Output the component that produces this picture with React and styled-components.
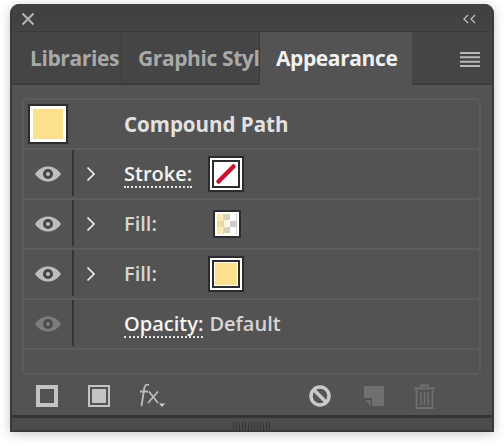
import React from 'react'
import styled, { createGlobalStyle } from 'styled-components'

const GlobalStyle = createGlobalStyle`
    html, body {
        margin: 0;
        padding: 0;
        background: #fff;
    }
    * {
        box-sizing: border-box;
    }
`

const Page = styled.div`
    width: 504px;
    height: 446px;
    padding: 4px 10px 14px;
    font-family: "Open Sans", "Noto Sans", sans-serif;
    overflow: hidden;
`

const Panel = styled.div`
    width: 484px;
    height: 428px;
    border-radius: 9px 9px 0 0;
    background: #535353;
    box-shadow: 0 2px 12px rgba(0, 0, 0, 0.22);
    border-right: 2px solid #3a3a3a;
    border-left: 2px solid #3a3a3a;
    border-bottom: 2px solid #3a3a3a;
    display: flex;
    flex-direction: column;
    overflow: hidden;
`

const TitleBar = styled.div`
    height: 28px;
    flex: none;
    background: linear-gradient(#3f3f3f, #444);
    border-bottom: 1px solid #3a3a3a;
    display: flex;
    align-items: center;
    justify-content: space-between;
    padding: 3px 15px 0 9px;
`

const TabBar = styled.div`
    height: 53px;
    flex: none;
    display: flex;
    background: #454545;
    border-bottom: 2px solid #3c3c3c;
`

const Tab = styled.div`
    width: ${p => p.$w}px;
    flex: none;
    height: ${p => (p.$active ? 53 : 51)}px;
    padding: 10px 0 0 ${p => p.$pad}px;
    font-size: 21px;
    font-weight: 700;
    line-height: 32px;
    letter-spacing: -0.4px;
    white-space: nowrap;
    overflow: hidden;
    color: ${p => (p.$active ? '#f1f1f1' : '#a9a9a9')};
    background: ${p => (p.$active ? '#535353' : 'transparent')};
    border-right: ${p => (p.$active ? 'none' : '1px solid #3b3b3b')};
`

const MenuButton = styled.div`
    margin-left: auto;
    margin-right: 12px;
    padding-top: 18px;
`

const Body = styled.div`
    flex: 1;
    padding: 13px 11px 0 10px;
    display: flex;
    flex-direction: column;
`

const List = styled.div`
    height: 277px;
    flex: none;
    border: 2px solid #5c5c5c;
    border-radius: 5px;
`

const Row = styled.div`
    height: 50px;
    display: grid;
    grid-template-columns: 48px 2px 50px 84px 1fr;
    align-items: center;
    border-bottom: 2px solid #5c5c5c;
`

const EyeCell = styled.div`
    display: flex;
    justify-content: center;
    padding-right: 1px;
    opacity: ${p => (p.$dim ? 0.4 : 1)};
`

const Divider = styled.div`
    width: 2px;
    height: 46px;
    margin-bottom: 2px;
    background: #353535;
`

const Chevron = styled.div`
    display: flex;
    padding-left: 12px;
`

const Label = styled.div`
    font-size: 20px;
    font-weight: 600;
    line-height: 26px;
    white-space: nowrap;
    color: #d6d6d6;
`

const Dotted = styled.span`
    color: #f4f4f4;
    border-bottom: 2px dotted #e4e4e4;
    display: inline-block;
    line-height: 24px;
`

const Value = styled.span`
    color: #d6d6d6;
    margin-left: 6px;
`

const HeaderRow = styled.div`
    height: 50px;
    display: flex;
    align-items: center;
    padding-left: 4px;
    border-bottom: 2px solid #5c5c5c;
`

const HeaderTitle = styled.div`
    font-size: 20.5px;
    font-weight: 700;
    color: #e2e2e2;
    margin-left: 56px;
    padding-bottom: 1px;
`

const Swatch = styled.div`
    flex: none;
    width: ${p => p.$size}px;
    height: ${p => p.$size}px;
    border: 2px solid #2c2c2c;
    background: #fff;
    padding: ${p => p.$pad}px;
    display: flex;
`

const InnerBorder = styled.div`
    flex: 1;
    border: 2px solid #2c2c2c;
    background: #fff;
    padding: 1px;
    display: flex;
`

const Yellow = styled.div`
    flex: 1;
    background: #fde08c;
`

const SwatchCell = styled.div`
    display: flex;
    padding-left: ${p => p.$pad}px;
`

const Checker = styled.div`
    flex: 1;
    background:
        linear-gradient(90deg, rgba(253, 224, 140, 0.85), rgba(253, 224, 140, 0) 70%),
        conic-gradient(#ccc 25%, #fff 0 50%, #ccc 0 75%, #fff 0) 0 0 / 13px 13px;
`

const Footer = styled.div`
    height: 40px;
    flex: none;
    display: flex;
    align-items: center;
    padding: 2px 0 0 14px;
`

const FooterIcon = styled.div`
    display: flex;
    flex: none;
    margin-left: ${p => p.$ml || 0}px;
`

const Grip = styled.div`
    height: 19px;
    flex: none;
    margin-top: auto;
    border-top: 3px solid #343434;
    background: #4c4c4c;
    display: flex;
    justify-content: center;
    align-items: center;
`

const GripLines = styled.div`
    width: 38px;
    height: 8px;
    background: repeating-linear-gradient(90deg, #343434 0 1px, transparent 1px 3px);
`

const Eye = () => (
    <svg width="28" height="20" viewBox="0 0 28 20">
        <path d="M1 10C5 4.5 9 2.5 14 2.5S23 4.5 27 10C23 15.500 19 17.500 14 17.500S5 15.500 1 10Z" fill="#bdbdbd" />
        <circle cx="14" cy="10" r="5" fill="#464646" />
        <circle cx="14" cy="10" r="2" fill="#bdbdbd" />
    </svg>
)

const ChevronIcon = () => (
    <svg width="10" height="16" viewBox="0 0 10 16">
        <path d="M1.500 1.500L8 8L1.500 14.500" fill="none" stroke="#f0f0f0" strokeWidth="1.700" />
    </svg>
)

const rows = [
    { label: 'Stroke:', dotted: true, swatch: 'stroke' },
    { label: 'Fill:', swatch: 'checker' },
    { label: 'Fill:', swatch: 'yellow' },
]

const RowSwatch = ({ type }) => {
    if (type === 'checker') {
        return (
            <SwatchCell $pad={5}>
                <Swatch $size={28} $pad={2}><Checker /></Swatch>
            </SwatchCell>
        )
    }
    return (
        <SwatchCell $pad={0}>
            <Swatch $size={36} $pad={2}>
                <InnerBorder>
                    {type === 'yellow' ? <Yellow /> : (
                        <svg width="22" height="22" viewBox="0 0 22 22">
                            <path d="M3.500 18.500L18.500 3.500" stroke="#c8102e" strokeWidth="4.500" strokeLinecap="round" />
                        </svg>
                    )}
                </InnerBorder>
            </Swatch>
        </SwatchCell>
    )
}

export default function App() {
    return (
        <Page>
            <GlobalStyle />
            <Panel>
                <TitleBar>
                    <svg width="14" height="14" viewBox="0 0 14 14">
                        <path d="M1.500 1.500L12.500 12.500M12.500 1.500L1.500 12.500" stroke="#b4b4b4" strokeWidth="2" />
                    </svg>
                    <svg width="15" height="10" viewBox="0 0 15 10">
                        <path d="M6 1L2 5L6 9M13 1L9 5L13 9" fill="none" stroke="#bdbdbd" strokeWidth="1.300" />
                    </svg>
                </TitleBar>
                <TabBar>
                    <Tab $w={110} $pad={18}>Libraries</Tab>
                    <Tab $w={138} $pad={16}>Graphic Styles</Tab>
                    <Tab $w={152} $pad={16} $active>Appearance</Tab>
                    <MenuButton>
                        <svg width="20" height="15" viewBox="0 0 20 15">
                            <path d="M0 1H20M0 5.300H20M0 9.700H20M0 14H20" stroke="#b8b8b8" strokeWidth="2" />
                        </svg>
                    </MenuButton>
                </TabBar>
                <Body>
                    <List>
                        <HeaderRow>
                            <Swatch $size={40} $pad={3}><Yellow /></Swatch>
                            <HeaderTitle>Compound Path</HeaderTitle>
                        </HeaderRow>
                        {rows.map((row, i) => (
                            <Row key={i}>
                                <EyeCell><Eye /></EyeCell>
                                <Divider />
                                <Chevron><ChevronIcon /></Chevron>
                                <Label>
                                    {row.dotted ? <Dotted>{row.label}</Dotted> : row.label}
                                </Label>
                                <RowSwatch type={row.swatch} />
                            </Row>
                        ))}
                        <Row>
                            <EyeCell $dim><Eye /></EyeCell>
                            <Divider />
                            <div />
                            <Label>
                                <Dotted>Opacity:</Dotted>
                                <Value>Default</Value>
                            </Label>
                        </Row>
                    </List>
                    <Footer>
                        <FooterIcon>
                            <svg width="22" height="22" viewBox="0 0 22 22">
                                <rect x="2" y="2" width="18" height="18" fill="none" stroke="#c4c4c4" strokeWidth="4" />
                            </svg>
                        </FooterIcon>
                        <FooterIcon $ml={30}>
                            <svg width="22" height="22" viewBox="0 0 22 22">
                                <rect x="1" y="1" width="20" height="20" fill="none" stroke="#c4c4c4" strokeWidth="2" />
                                <rect x="4" y="4" width="14" height="14" fill="#c4c4c4" />
                            </svg>
                        </FooterIcon>
                        <FooterIcon $ml={27}>
                            <svg width="30" height="28" viewBox="0 0 30 28">
                                <path d="M12 3C8.500 1.500 7.500 4 7 8L4.500 24" fill="none" stroke="#bcbcbc" strokeWidth="1.800" />
                                <path d="M3 9.500H11" stroke="#bcbcbc" strokeWidth="1.800" />
                                <path d="M12 9.500L21 21M21 9.500L11 21" stroke="#bcbcbc" strokeWidth="1.800" />
                                <path d="M22 21.500H28L25 25Z" fill="#d0d0d0" />
                            </svg>
                        </FooterIcon>
                        <FooterIcon $ml={141}>
                            <svg width="24" height="24" viewBox="0 0 24 24">
                                <circle cx="12" cy="12" r="9" fill="none" stroke="#cacaca" strokeWidth="3.500" />
                                <path d="M6 6L18 18" stroke="#cacaca" strokeWidth="3.500" />
                            </svg>
                        </FooterIcon>
                        <FooterIcon $ml={32}>
                            <svg width="21" height="21" viewBox="0 0 21 21">
                                <path d="M0 0H20V20H8V12H0Z" fill="#6f6f6f" />
                                <path d="M1.500 14H6.500V20Z" fill="#6f6f6f" />
                            </svg>
                        </FooterIcon>
                        <FooterIcon $ml={29}>
                            <svg width="21" height="25" viewBox="0 0 21 25">
                                <path d="M0 4.500H21M7 4V1.500H14V4" fill="none" stroke="#6f6f6f" strokeWidth="1.800" />
                                <path d="M2.500 6V24H18.500V6" fill="none" stroke="#6f6f6f" strokeWidth="1.800" />
                                <path d="M7 8V21M10.500 8V21M14 8V21" stroke="#6f6f6f" strokeWidth="1.500" />
                            </svg>
                        </FooterIcon>
                    </Footer>
                </Body>
                <Grip>
                    <GripLines />
                </Grip>
            </Panel>
        </Page>
    )
}
